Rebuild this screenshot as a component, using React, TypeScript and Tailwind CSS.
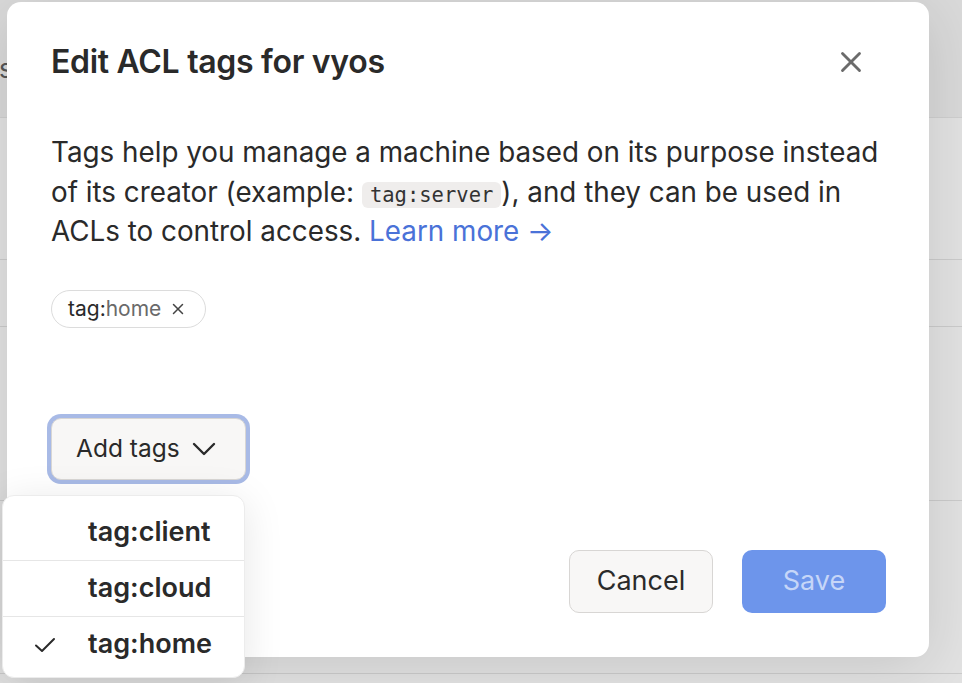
import { X } from 'lucide-react'

const tags = [
  { name: 'tag:client', selected: false },
  { name: 'tag:cloud', selected: false },
  { name: 'tag:home', selected: true }
]

const Backdrop = () => (
  <div className="flex flex-col w-[962px] h-[683px] bg-[#e2e2e2]">
    <div className="h-[118px] bg-[#d9d9d9] border-b border-[#cfcfcf] pt-[56px]">
      <span className="block ml-[-1px] text-[26px] text-[#555] leading-[26px]">s</span>
    </div>
    <div className="h-[142px] border-b border-[#cbcbcb]" />
    <div className="h-[67px] border-b border-[#cbcbcb]" />
    <div className="h-[174px] border-b border-[#cbcbcb]" />
    <div className="h-[173px] border-b border-[#cbcbcb]" />
  </div>
)

const TagMenu = () => (
  <div className="absolute left-[2px] top-[495px] w-[243px] h-[183px] rounded-[12px] bg-white border border-[#ececec] shadow-[0_6px_40px_rgba(0,0,0,0.10)] py-[8px]">
    {tags.map((tag, i) => (
      <div
        key={tag.name}
        className={
          i > 0
            ? 'flex items-center h-[56px] border-t border-[#e6e6e6]'
            : 'flex items-center h-[56px]'
        }
      >
        <div className="w-[85px] pl-[31px]">
          {tag.selected && (
            <svg width="22" height="16" viewBox="0 0 22 16" fill="none" stroke="#2a2a2a" strokeWidth="2" strokeLinecap="round" strokeLinejoin="round">
              <polyline points="2,8.5 8,14 20,2" />
            </svg>
          )}
        </div>
        <span className="font-semibold text-[27px] text-[#2a2a2a]">{tag.name}</span>
      </div>
    ))}
  </div>
)

export default function App() {
  return (
    <div className="relative w-[962px] h-[683px] overflow-hidden font-['Inter','Noto_Sans',sans-serif]">
      <Backdrop />

      <div className="absolute left-[7px] top-[2px] w-[922px] h-[655px] rounded-[14px] bg-white shadow-[0_10px_60px_rgba(0,0,0,0.12)] flex flex-col pl-[44px] pr-[43px] pt-[40px] pb-[44px]">
        <div className="flex items-center justify-between h-[40px]">
          <h2 className="text-[32px] font-semibold text-[#2a2a2a] tracking-[-0.3px]">
            Edit ACL tags for vyos
          </h2>
          <button className="mr-[18px] text-[#6b6b6b]">
            <X size={34} strokeWidth={2} />
          </button>
        </div>

        <p className="mt-[51px] text-[27.8px] leading-[39.5px] text-[#2a2a2a]">
          Tags help you manage a machine based on its purpose instead of its creator (example:{' '}
          <code className="font-['DejaVu_Sans_Mono',monospace] text-[20.5px] leading-[20px] bg-[#efedec] rounded-[6px] px-[8px] py-[1px] text-[#333]">
            tag:server
          </code>
          ), and they can be used in ACLs to control access.{' '}
          <a className="text-[#4a72d8]">Learn more →</a>
        </p>

        <div className="mt-[38px] flex">
          <div className="flex items-center h-[38px] rounded-full border border-[#dcdcdc] pl-[16px] pr-[18px] text-[21px]">
            <span className="text-[#2a2a2a]">tag:</span>
            <span className="text-[#6a6a6a]">home</span>
            <X size={18} strokeWidth={2} className="ml-[8px] text-[#444]" />
          </div>
        </div>

        <div className="mt-[90px] flex">
          <button className="flex items-center h-[62px] w-[195px] pl-[24px] rounded-[10px] border border-[#d8d6d4] bg-[#f8f7f6] shadow-[0_0_0_4px_#a8bae6] text-[24.5px] text-[#2a2a2a]">
            Add tags
            <svg className="ml-[12px]" width="24" height="14" viewBox="0 0 24 14" fill="none" stroke="#2a2a2a" strokeWidth="2.4" strokeLinecap="round" strokeLinejoin="round">
              <polyline points="2,2 12,12 22,2" />
            </svg>
          </button>
        </div>

        <div className="mt-auto flex justify-end gap-[29px]">
          <button className="w-[144px] h-[63px] rounded-[10px] border border-[#d8d6d4] bg-[#f8f7f6] text-[27px] text-[#2a2a2a]">
            Cancel
          </button>
          <button className="w-[144px] h-[63px] rounded-[10px] bg-[#6d95eb] text-[27px] text-[#c6d6f8]">
            Save
          </button>
        </div>
      </div>

      <TagMenu />
    </div>
  )
}
